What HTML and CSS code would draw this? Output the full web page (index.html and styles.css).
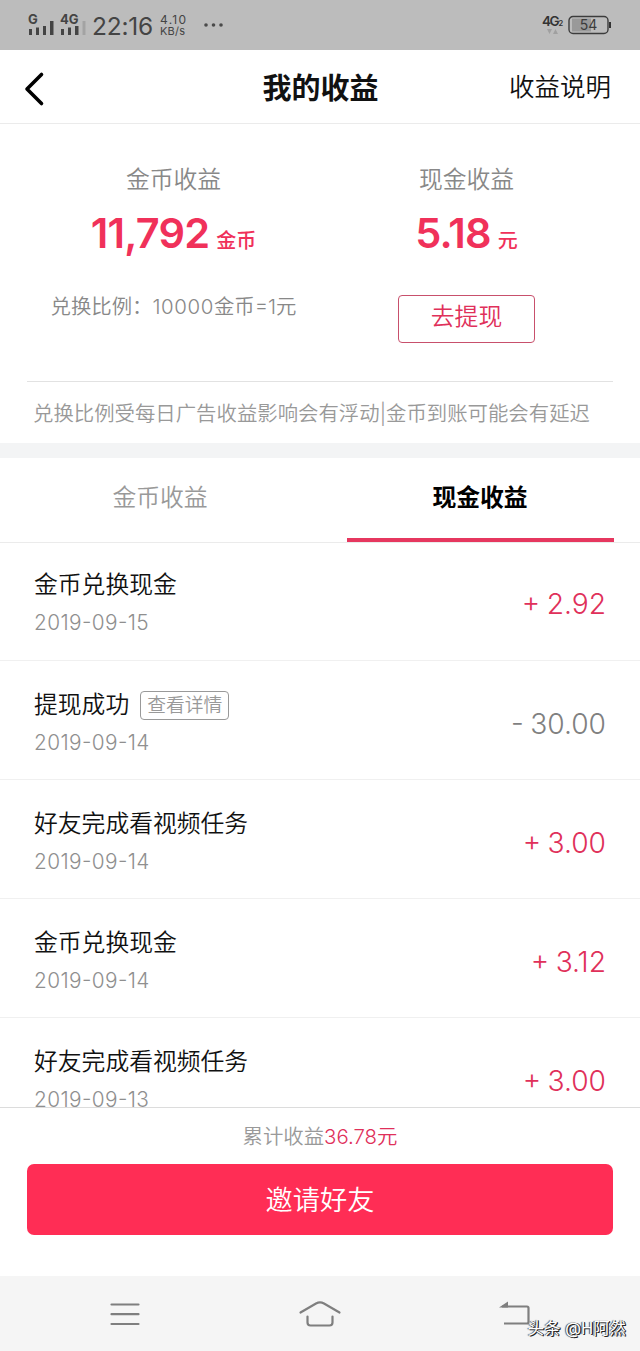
FILE: index.html
```html
<!DOCTYPE html>
<html lang="zh-CN">
<head>
  <meta charset="UTF-8">
  <title>我的收益</title>
  <link rel="stylesheet" href="styles.css">
</head>
<body>
<div class="page">
  <!--状态栏-->
  <div class="status">
    <svg class="signal" width="60" height="26" viewBox="0 0 60 26">
      <g fill="#444">
        <text class="net" x="0" y="12">G</text>
        <text class="net" x="32" y="12">4G</text>
        <rect x="1" y="17" width="3" height="6"/>
        <rect x="8" y="15.500" width="3" height="7.500"/>
        <rect x="15" y="14" width="3" height="9"/>
        <rect x="22" y="9" width="3.500" height="14"/>
        <rect x="33" y="17" width="3" height="6"/>
        <rect x="40" y="15.500" width="3" height="7.500"/>
        <rect x="47" y="14" width="3.500" height="9"/>
      </g>
      <rect x="54.500" y="9" width="3" height="14" fill="#a3a3a3"/>
    </svg>
    <span class="time">22:16</span>
    <span class="speed"><span>4.10</span><span class="unit">KB/s</span></span>
    <svg class="more" width="20" height="4" viewBox="0 0 20 4" fill="#4a4a4a">
      <circle cx="2" cy="2" r="1.800"/>
      <circle cx="9.500" cy="2" r="1.800"/>
      <circle cx="17" cy="2" r="1.800"/>
    </svg>
    <svg class="data" width="24" height="24" viewBox="0 0 24 24">
      <text class="net4" x="0" y="13" fill="#333">4G</text>
      <text class="net2" x="16.500" y="13" fill="#333">2</text>
      <path d="M5 16h5l-2.500 5zM11 21h5l-2.500-5z" fill="#a0a0a0"/>
    </svg>
    <svg class="battery" width="44" height="20" viewBox="0 0 44 20">
      <rect x="4" y="3.500" width="19" height="13" fill="#999"/>
      <rect x="1" y="1.500" width="39" height="17" rx="4" fill="none" stroke="#3c3c3c" stroke-width="1.400"/>
      <path d="M42 7v6" stroke="#333" stroke-width="2"/>
      <text x="20.500" y="15" fill="#3c3c3c">54</text>
    </svg>
  </div>

  <!--标题栏-->
  <div class="header">
    <svg class="back" width="22" height="36" viewBox="0 0 22 36" fill="none" stroke="#000" stroke-width="3.600" stroke-linecap="round" stroke-linejoin="round">
      <path d="M18.500 3.500L4 18l14.500 14.500"/>
    </svg>
    <h1>我的收益</h1>
    <a class="explain">收益说明</a>
  </div>

  <!--收益汇总-->
  <div class="summary">
    <div class="col">
      <p class="label">金币收益</p>
      <p class="money">11,792<span>金币</span></p>
      <p class="ratio">兑换比例：<b>10000</b>金币=1元</p>
    </div>
    <div class="col">
      <p class="label">现金收益</p>
      <p class="money">5.18<span>元</span></p>
      <a class="withdraw">去提现</a>
    </div>
  </div>
  <p class="note">兑换比例受每日广告收益影响会有浮动|金币到账可能会有延迟</p>

  <div class="tabs">
    <a>金币收益</a>
    <a class="current">现金收益</a>
  </div>

  <!--收益明细-->
  <ul class="list">
    <li>
      <div><p class="name">金币兑换现金</p><p class="date">2019-09-15</p></div>
      <span class="num">+ 2.92</span>
    </li>
    <li>
      <div><p class="name">提现成功<em>查看详情</em></p><p class="date">2019-09-14</p></div>
      <span class="num out">- 30.00</span>
    </li>
    <li>
      <div><p class="name">好友完成看视频任务</p><p class="date">2019-09-14</p></div>
      <span class="num">+ 3.00</span>
    </li>
    <li>
      <div><p class="name">金币兑换现金</p><p class="date">2019-09-14</p></div>
      <span class="num">+ 3.12</span>
    </li>
    <li>
      <div><p class="name">好友完成看视频任务</p><p class="date">2019-09-13</p></div>
      <span class="num">+ 3.00</span>
    </li>
  </ul>

  <div class="footer">
    <p>累计收益<span>36.78元</span></p>
    <a class="invite">邀请好友</a>
  </div>

  <!--系统导航键-->
  <div class="nav">
    <svg width="32" height="26" viewBox="0 0 32 26" fill="none" stroke="#7f7f7f" stroke-width="2.200" stroke-linecap="round">
      <path d="M2.500 3.500h27M2.500 13.200h27M2.500 23h27"/>
    </svg>
    <svg width="44" height="30" viewBox="0 0 44 30" fill="none" stroke="#7f7f7f" stroke-width="2.200" stroke-linecap="round">
      <path d="M2.500 13.500L18 4.500q4-2.200 8 0l15.500 9M9.500 17.500v6q0 3 3 3h19q3 0 3-3v-6"/>
    </svg>
    <svg width="32" height="28" viewBox="0 0 32 28" fill="none" stroke="#7f7f7f" stroke-width="2.200">
      <path d="M3 6.500h25q1.500 0 1.500 1.500v14q0 1.500-1.500 1.500H5"/>
      <path d="M0 7.500l9-6v6z" fill="#7f7f7f" stroke="none"/>
    </svg>
    <span class="mark">头条 @H阿然</span>
  </div>
</div>
</body>
</html>
```

FILE: styles.css
```css
* {
  margin: 0;
  padding: 0;
  box-sizing: border-box;
}

body {
  font-family: Inter, "Noto Sans CJK SC", sans-serif;
  font-weight: 350;
  color: #111;
  background-color: #fff;
}

ul {
  list-style: none;
}

svg {
  display: block;
}

.page {
  width: 640px;
  height: 1351px;
  display: flex;
  flex-direction: column;
  overflow: hidden;
}

.status {
  height: 50px;
  padding: 0 28px;
  display: flex;
  flex: none;
  align-items: center;
  color: #444;
  background-color: #bcbcbc;
}

.signal {
  margin-top: -1px;
}

.net {
  font-size: 13px;
  font-weight: 700;
}

.time {
  width: 66px;
  margin-left: 4px;
  font-size: 24.5px;
  font-weight: 400;
  line-height: 50px;
  padding-top: 2px;
  letter-spacing: -0.2px;
}

.speed {
  width: 30px;
  margin-left: 2px;
  display: flex;
  flex-direction: column;
  font-size: 12px;
  font-weight: 400;
  line-height: 12px;
  letter-spacing: 1.3px;
}

.unit {
  font-size: 11px;
  line-height: 11px;
  letter-spacing: 0.2px;
}

.more {
  margin-left: 14px;
}

.data {
  margin-left: auto;
}

.net4 {
  font-size: 13.5px;
  font-weight: 600;
  letter-spacing: -1.5px;
}

.net2 {
  font-size: 7.5px;
  font-weight: 600;
}

.battery {
  margin-left: 2px;
}

.battery text {
  font-size: 14px;
  font-weight: 400;
  text-anchor: middle;
}

.header {
  height: 74px;
  padding: 0 29px 0 23px;
  display: grid;
  grid-template-columns: 1fr auto 1fr;
  flex: none;
  align-items: center;
  border-bottom: 1px solid #ebebeb;
}

.back {
  margin-top: 4px;
}

.header h1 {
  font-size: 29px;
  font-weight: 700;
  line-height: 70px;
  padding: 4px 0 0 7px;
}

.explain {
  font-size: 25.5px;
  line-height: 70px;
  justify-self: end;
}

.summary {
  height: 258px;
  margin: 0 27px;
  padding-top: 38px;
  display: flex;
  flex: none;
  border-bottom: 1px solid #e2e2e2;
}

.col {
  width: 293px;
  text-align: center;
}

.label {
  font-size: 23.8px;
  line-height: 36px;
  color: #888;
}

.money {
  height: 61px;
  font-size: 41.5px;
  font-weight: 600;
  line-height: 50px;
  padding-top: 10px;
  letter-spacing: -0.8px;
  color: #f0315a;
}

.money span {
  margin-left: 7px;
  font-size: 20px;
  font-weight: 500;
  letter-spacing: 0;
}

.ratio {
  margin-top: 33px;
  font-size: 20.4px;
  line-height: 30px;
  color: #888;
  white-space: nowrap;
}

.ratio b {
  font-weight: inherit;
  letter-spacing: 0.6px;
}

.withdraw {
  width: 137px;
  height: 48px;
  margin: 36px 0 0 78px;
  display: block;
  font-size: 23.8px;
  line-height: 41px;
  color: #e0305a;
  border: 1px solid #c8506c;
  border-radius: 4px;
}

.note {
  height: 61px;
  padding-left: 33px;
  flex: none;
  font-size: 20.4px;
  line-height: 63px;
  color: #999;
  white-space: nowrap;
}

.tabs {
  height: 100px;
  display: flex;
  flex: none;
  border-top: 15px solid #f3f4f5;
  border-bottom: 1px solid #ebebeb;
}

.tabs a {
  width: 320px;
  display: flex;
  flex-direction: column;
  align-items: center;
  font-size: 23.8px;
  line-height: 80px;
  color: #999;
}

.tabs .current {
  font-weight: 700;
  color: #000;
}

.tabs .current::after {
  content: "";
  width: 267px;
  height: 4px;
  background-color: #e6375f;
}

.list {
  height: 564px;
  overflow: hidden;
}

.list li {
  height: 119px;
  padding: 26px 34px 0;
  display: flex;
  justify-content: space-between;
  border-bottom: 1px solid #f0f0f0;
}

.list li:first-child {
  height: 118px;
  padding-top: 24px;
}

.name {
  display: flex;
  align-items: center;
  font-size: 23.8px;
  line-height: 36px;
}

.name em {
  height: 29px;
  margin-left: 11px;
  padding: 0 6px;
  font-size: 18.8px;
  font-style: normal;
  line-height: 27px;
  color: #999;
  border: 1px solid #999;
  border-radius: 4px;
}

.date {
  margin-top: 3px;
  font-size: 20.8px;
  font-weight: 300;
  line-height: 33px;
  letter-spacing: 0.4px;
  color: #8f8f8f;
  font-feature-settings: "case";
}

.num {
  font-size: 28.2px;
  font-weight: 300;
  line-height: 75px;
  word-spacing: -1.5px;
  color: #e0305a;
  font-feature-settings: "case";
}

.out {
  color: #808080;
}

.footer {
  height: 169px;
  padding: 0 27px;
  flex: none;
  text-align: center;
  border-top: 1px solid #dcdcdc;
}

.footer p {
  height: 56px;
  font-size: 20.4px;
  line-height: 58px;
  color: #999;
}

.footer p span {
  color: #e0305a;
}

.invite {
  height: 71px;
  display: block;
  font-size: 27.2px;
  line-height: 74px;
  color: #fff;
  background-color: #ff2d55;
  border-radius: 7px;
}

.nav {
  height: 75px;
  padding: 0 109px;
  display: flex;
  flex: none;
  align-items: center;
  justify-content: space-between;
  position: relative;
  background-color: #f5f5f5;
}

.mark {
  position: absolute;
  right: 14px;
  bottom: 11px;
  font-size: 16.4px;
  font-weight: 400;
  line-height: 24px;
  color: #fff;
  text-shadow: 1px 0 0 #222, -1px 0 1px #444, 1px 1px 0 #222;
}
```
